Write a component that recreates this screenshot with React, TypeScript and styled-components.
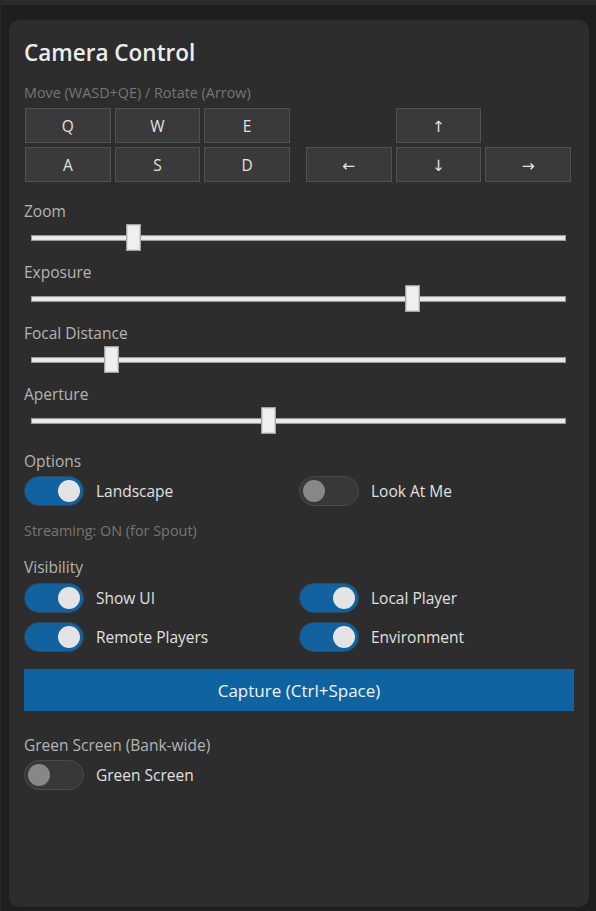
import * as React from 'react'
import styled, { createGlobalStyle } from 'styled-components'

const GlobalStyle = createGlobalStyle`
  html, body {
    margin: 0;
    padding: 0;
    background: #1e1e1e;
    font-family: 'Open Sans', 'Noto Sans', 'DejaVu Sans', sans-serif;
  }
  * { box-sizing: border-box; }
`

const Page = styled.div`
  width: 596px;
  height: 911px;
  border-left: 1px solid #262626;
  overflow: hidden;
`

const TopStrip = styled.div`
  height: 5px;
  background: #2b2b2b;
`

const Panel = styled.section`
  margin: 15px 0 0 8px;
  width: 580px;
  height: 887px;
  padding: 18px 15px 0 15px;
  background: #2d2d2d;
  border-radius: 10px;
  display: flex;
  flex-direction: column;
`

const Title = styled.h1`
  margin: 0;
  font-size: 22.5px;
  line-height: 30px;
  font-weight: 600;
  color: #ececec;
`

const Hint = styled.div<{ $top: number }>`
  margin-top: ${ p => p.$top }px;
  font-size: 14.4px;
  line-height: 18px;
  color: #757575;
`

const SectionLabel = styled.div<{ $top: number }>`
  margin-top: ${ p => p.$top }px;
  font-size: 15.5px;
  line-height: 20px;
  color: #b4b4b4;
`

const Keypad = styled.div`
  margin-top: 6px;
  display: flex;
  justify-content: space-between;
  width: 546px;
  margin-left: 1px;
`

const KeyGroup = styled.div`
  width: 265px;
  display: grid;
  grid-template-columns: repeat(3, 1fr);
  grid-auto-rows: 35px;
  gap: 4px;
`

const Key = styled.button<{ $hidden?: boolean }>`
  visibility: ${ p => p.$hidden ? 'hidden' : 'visible' };
  background: #3a3a3a;
  border: 1px solid #515151;
  color: #e2e2e2;
  font-family: inherit;
  font-size: 15.5px;
  padding: 0;
  cursor: pointer;
`

const SliderRow = styled.div`
  margin-top: 3px;
  height: 27px;
  padding: 0 8px 0 7px;
  display: flex;
  align-items: center;
`

const Track = styled.div`
  position: relative;
  flex: 1;
  height: 6px;
  background: linear-gradient(#dcdcdc, #f2f2f2 50%, #dcdcdc);
  border: 1px solid #9c9c9c;
`

const Thumb = styled.div`
  position: absolute;
  top: -12px;
  width: 15px;
  height: 27px;
  background: #efefef;
  border: 1px solid #a2a2a2;
  box-shadow: inset 0 0 0 1px #d8d8d8;
`

const ToggleGrid = styled.div<{ $top: number }>`
  margin-top: ${ p => p.$top }px;
  display: grid;
  grid-template-columns: 1fr 1fr;
  row-gap: 9px;
`

const ToggleItem = styled.label`
  display: flex;
  align-items: center;
  gap: 12px;
  font-size: 15.5px;
  color: #e0e0e0;
  height: 30px;
`

const Switch = styled.span<{ $on: boolean }>`
  position: relative;
  width: 60px;
  height: 30px;
  border-radius: 15px;
  background: ${ p => p.$on ? '#11629f' : '#383838' };
  border: 1px solid ${ p => p.$on ? '#2b4a64' : '#4a4a4a' };
  flex-shrink: 0;
`

const Knob = styled.span<{ $on: boolean }>`
  position: absolute;
  top: 3px;
  left: ${ p => p.$on ? '33px' : '3px' };
  width: 22px;
  height: 22px;
  border-radius: 50%;
  background: ${ p => p.$on ? '#e4e4e4' : '#878787' };
`

const CaptureButton = styled.button`
  margin-top: 17px;
  height: 42px;
  width: 100%;
  background: #0f63a0;
  border: none;
  color: #f0f4f8;
  font-family: inherit;
  font-size: 17px;
  cursor: pointer;
`

const sliders = [
  { label: 'Zoom', value: 0.183 },
  { label: 'Exposure', value: 0.72 },
  { label: 'Focal Distance', value: 0.14 },
  { label: 'Aperture', value: 0.442 },
]

const Slider = ({ value }: { value: number }) => (
  <SliderRow>
    <Track>
      <Thumb style={{ left: `calc(${ value } * (100% - 13px) - 1px)` }} />
    </Track>
  </SliderRow>
)

const Toggle = ({ on, label }: { on: boolean, label: string }) => (
  <ToggleItem>
    <Switch $on={ on }><Knob $on={ on } /></Switch>
    { label }
  </ToggleItem>
)

export default function App() {
  return (
    <Page>
      <GlobalStyle />
      <TopStrip />
      <Panel>
        <Title>{ 'Camera Control' }</Title>
        <Hint $top={ 16 }>{ 'Move (WASD+QE) / Rotate (Arrow)' }</Hint>
        <Keypad>
          <KeyGroup>
            <Key>{ 'Q' }</Key><Key>{ 'W' }</Key><Key>{ 'E' }</Key>
            <Key>{ 'A' }</Key><Key>{ 'S' }</Key><Key>{ 'D' }</Key>
          </KeyGroup>
          <KeyGroup>
            <Key $hidden /><Key>{ '↑' }</Key><Key $hidden />
            <Key>{ '←' }</Key><Key>{ '↓' }</Key><Key>{ '→' }</Key>
          </KeyGroup>
        </Keypad>
        { sliders.map((s, i) => (
          <React.Fragment key={ s.label }>
            <SectionLabel $top={ i === 0 ? 19 : 11 }>{ s.label }</SectionLabel>
            <Slider value={ s.value } />
          </React.Fragment>
        )) }
        <SectionLabel $top={ 17 }>{ 'Options' }</SectionLabel>
        <ToggleGrid $top={ 5 }>
          <Toggle on label={ 'Landscape' } />
          <Toggle on={ false } label={ 'Look At Me' } />
        </ToggleGrid>
        <Hint $top={ 16 }>{ 'Streaming: ON (for Spout)' }</Hint>
        <SectionLabel $top={ 17 }>{ 'Visibility' }</SectionLabel>
        <ToggleGrid $top={ 6 }>
          <Toggle on label={ 'Show UI' } />
          <Toggle on label={ 'Local Player' } />
          <Toggle on label={ 'Remote Players' } />
          <Toggle on label={ 'Environment' } />
        </ToggleGrid>
        <CaptureButton>{ 'Capture (Ctrl+Space)' }</CaptureButton>
        <SectionLabel $top={ 24 }>{ 'Green Screen (Bank-wide)' }</SectionLabel>
        <ToggleGrid $top={ 5 }>
          <Toggle on={ false } label={ 'Green Screen' } />
        </ToggleGrid>
      </Panel>
    </Page>
  )
}
